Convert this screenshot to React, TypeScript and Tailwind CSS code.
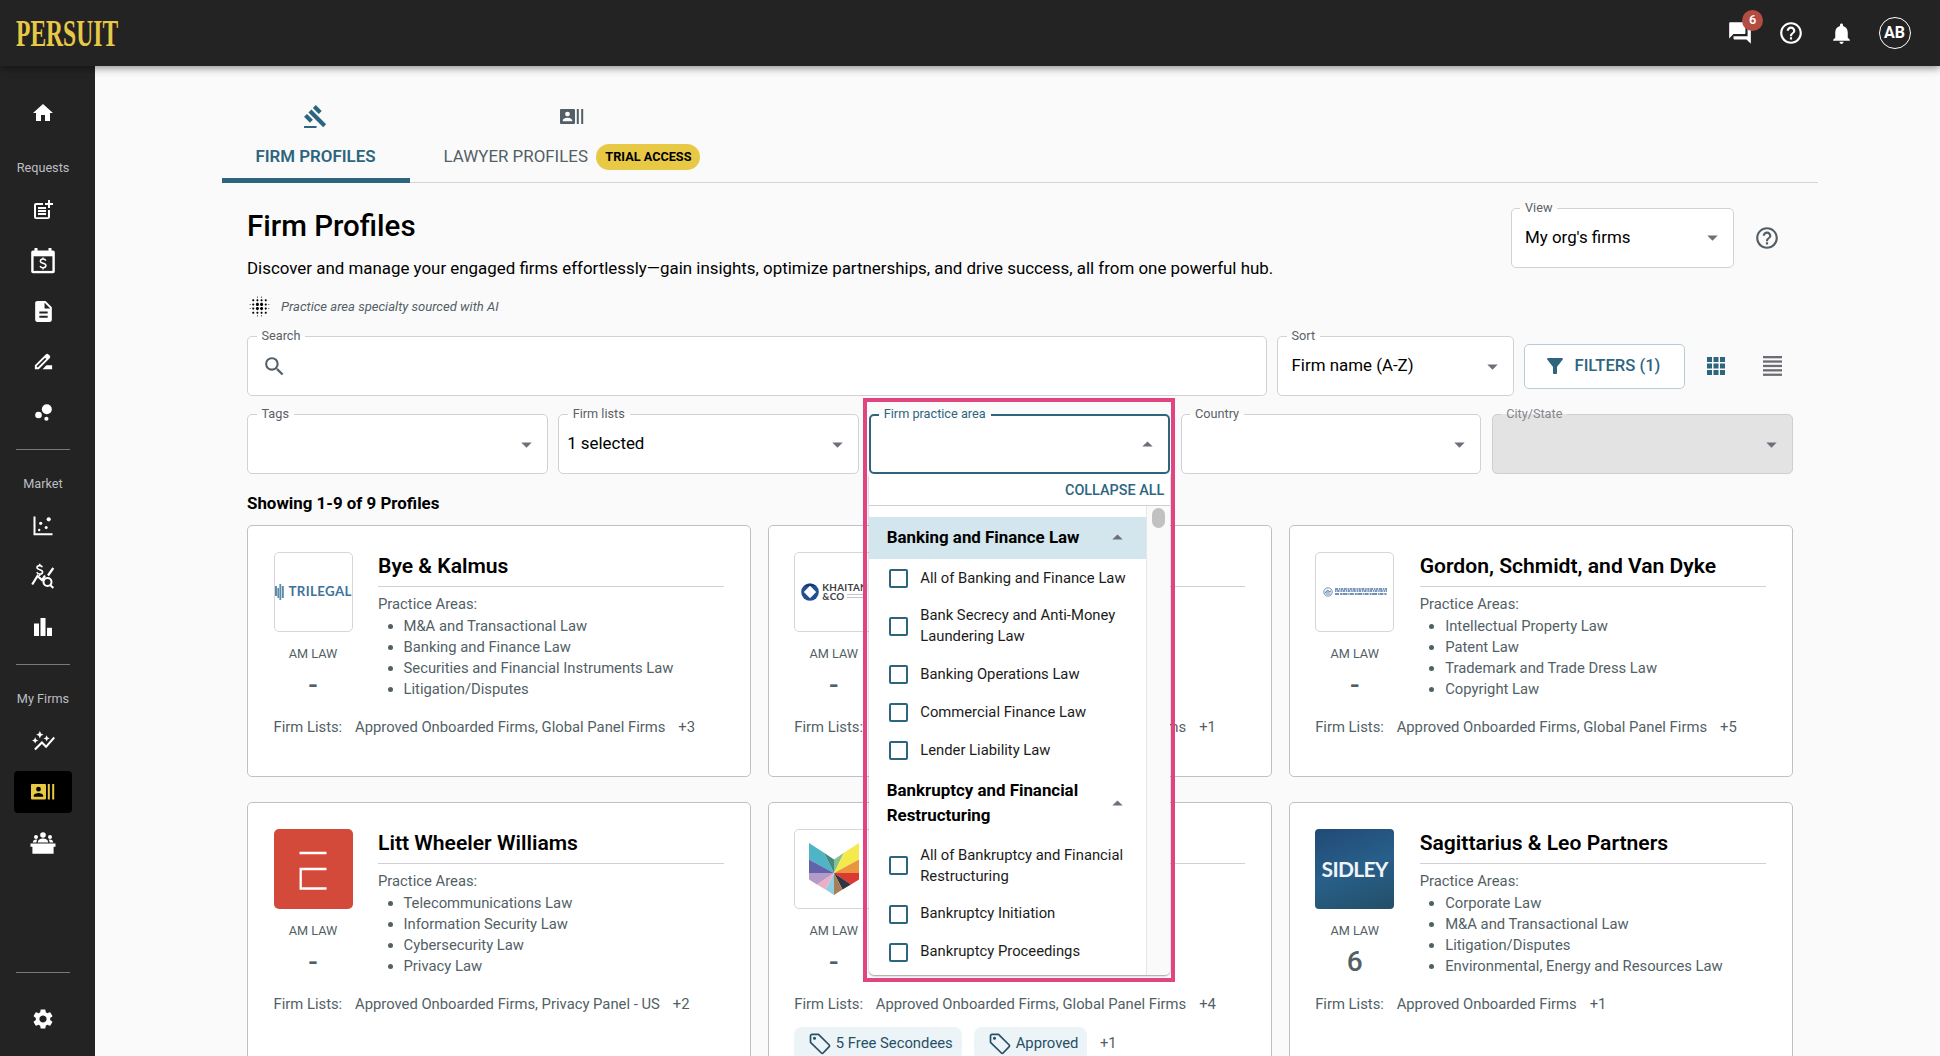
import type { ReactNode } from "react";
import {
  MdArrowDropDown,
  MdArrowDropUp,
  MdAutoGraph,
  MdBlurOn,
  MdBubbleChart,
  MdDescription,
  MdDriveFileRenameOutline,
  MdFilterAlt,
  MdForum,
  MdGavel,
  MdHelpOutline,
  MdHome,
  MdNotifications,
  MdPostAdd,
  MdSearch,
  MdSettings,
} from "react-icons/md";

/* ---------- icons ---------- */

function CalendarMoneyIcon() {
  return (
    <svg width="26" height="28" viewBox="0 0 26 28" fill="none">
      <path d="M4.5 1h3v2.5h11V1h3v2.5H23A1.8 1.8 0 0 1 24.8 5.3V24.500A1.8 1.8 0 0 1 23 26.300H3A1.800 1.800 0 0 1 1.200 24.500V5.300A1.800 1.800 0 0 1 3 3.500h1.500z" fill="#fff" />
      <rect x="3.600" y="9.300" width="18.800" height="14.600" fill="#232323" />
      <path d="M15.800 13.600c-.4-1-1.400-1.500-2.700-1.500-1.500 0-2.700.8-2.700 2.100 0 2.900 5.500 1.300 5.500 4.300 0 1.400-1.300 2.200-2.800 2.200-1.400 0-2.600-.6-3-1.800M13 10.400v1.800M13 20.600v1.800" stroke="#fff" strokeWidth="1.500" />
    </svg>
  );
}

function ScatterIcon() {
  return (
    <svg width="20" height="20" viewBox="0 0 20 20" fill="#fff">
      <path d="M.5.500h2v16.800h17v2H.5z" />
      <circle cx="7.700" cy="7.300" r="1.600" />
      <circle cx="15.700" cy="3.300" r="2.100" />
      <circle cx="13.200" cy="11.400" r="1.500" />
      <circle cx="6.200" cy="14" r="1.200" />
    </svg>
  );
}

function MoneyStatsIcon() {
  return (
    <svg width="24" height="26" viewBox="0 0 24 26" fill="none" stroke="#fff">
      <path d="M1.200 21.500 6.500 13l4.500 4 3-4.500M17 12.500l5.300-7.500" strokeWidth="2.200" />
      <circle cx="16.500" cy="19" r="4" strokeWidth="2" />
      <path d="m19.300 22 3 3" strokeWidth="2" />
      <path d="M11.300 4.200C10.800 3 9.800 2.600 8.700 2.600c-1.500 0-2.700.7-2.700 2 0 2.700 5.600 1.500 5.600 4.300 0 1.400-1.300 2.100-2.800 2.100-1.400 0-2.500-.5-3-1.700M8.700.700v2M8.700 11v2" strokeWidth="1.600" />
    </svg>
  );
}

function BarsIcon() {
  return (
    <svg width="18" height="18" viewBox="0 0 18 18" fill="#fff">
      <rect x="0" y="5.500" width="5" height="12.500" />
      <rect x="6.500" y="0" width="5" height="18" />
      <rect x="13" y="9.800" width="5" height="8.200" />
    </svg>
  );
}

function ContactsIcon({ width, height }: { width: number; height: number }) {
  return (
    <svg width={width} height={height} viewBox="0 0 24 15.500" preserveAspectRatio="none" fill="currentColor">
      <path
        fillRule="evenodd"
        d="M1 0h13a1 1 0 0 1 1 1v13.500a1 1 0 0 1-1 1H1a1 1 0 0 1-1-1V1a1 1 0 0 1 1-1zm6.500 2.800a2.400 2.400 0 1 0 0 4.800 2.400 2.400 0 0 0 0-4.800zM2.800 12.700h9.400v-1c0-1.700-3.100-2.600-4.700-2.600s-4.700.9-4.700 2.600z"
      />
      <rect x="16.800" width="2" height="15.500" />
      <rect x="21.200" width="2" height="15.500" />
    </svg>
  );
}

function PanelIcon() {
  return (
    <svg width="26" height="22" viewBox="0 0 26 22" fill="#fff">
      <circle cx="13" cy="3" r="2.800" />
      <circle cx="6" cy="5" r="2" />
      <circle cx="20" cy="5" r="2" />
      <path d="M7.800 10.500c0-2.600 2.500-4 5.200-4s5.200 1.400 5.200 4zM2.800 10.500c0-1.900 1.500-2.900 3.500-2.900.4 0 .8 0 1 .1-.6.800-.9 1.700-.9 2.800zM23.200 10.500c0-1.900-1.500-2.900-3.500-2.900-.4 0-.8 0-1 .1.600.8.900 1.700.9 2.800z" />
      <path d="M.5 11.500h25v3.200h-1.900v7H2.400v-7H.5z" />
    </svg>
  );
}

function GridIcon() {
  const cells = [0, 6.500, 13];
  return (
    <svg width="18" height="18" viewBox="0 0 18 18" fill="#2d657f">
      {cells.map((y) => cells.map((x) => <rect key={`${x}-${y}`} x={x} y={y} width="5" height="5" />))}
    </svg>
  );
}

function ListIcon() {
  return (
    <svg width="19" height="20" viewBox="0 0 19 20" fill="#6c6c74">
      {[0, 4.400, 8.800, 13.200, 17.600].map((y) => (
        <rect key={y} y={y} width="19" height="2.300" />
      ))}
    </svg>
  );
}

function TagIcon() {
  return (
    <svg width="22" height="22" viewBox="0 0 22 22" fill="none" stroke="#255065" strokeWidth="1.700" strokeLinejoin="round">
      <path d="M1.500 2.800A1.500 1.500 0 0 1 3 1.300h6.500L20.200 12a1.200 1.200 0 0 1 0 1.700l-6.100 6.300a1.200 1.200 0 0 1-1.700 0L1.500 9.300z" />
      <circle cx="5.500" cy="5.200" r=".7" fill="#255065" />
    </svg>
  );
}

/* ---------- firm logos ---------- */

function LogoFrame({ children }: { children: ReactNode }) {
  return (
    <div className="flex h-[80px] w-[79px] items-center justify-center overflow-hidden rounded-[5px] border border-[#d6d6da] bg-white">
      {children}
    </div>
  );
}

function TrilegalLogo() {
  return (
    <LogoFrame>
      <div className="flex w-full items-center gap-[5px]">
        <svg width="9" height="16" viewBox="0 0 9 16" fill="#5f8bab" className="shrink-0">
          <rect x="0" y="2" width="2" height="10" />
          <rect x="2.400" y="4" width="1.600" height="10" />
          <rect x="4.400" y="0" width="1.800" height="16" />
          <rect x="6.800" y="2" width="2" height="12" />
        </svg>
        <span className="font-[Lato] text-[13.300px] leading-none font-bold tracking-[0.350px] text-[#3f7299]">TRILEGAL</span>
      </div>
    </LogoFrame>
  );
}

function KhaitanLogo() {
  return (
    <LogoFrame>
      <div className="flex w-full items-center gap-[3px] pl-[6px]">
        <svg width="18" height="18" viewBox="0 0 18 18" className="shrink-0">
          <circle cx="9" cy="9" r="8.800" fill="#234f92" />
          <path d="M3 3.500A8.800 8.800 0 0 1 15 3L9 3z" fill="#17335f" />
          <path d="m9 2.800 6.200 6.200L9 15.200 2.800 9z" fill="#fff" />
        </svg>
        <div className="w-[50px] shrink-0 font-[Lato] text-[9.800px] leading-[9px] font-bold tracking-[0.300px] text-[#3d3d42]">
          <div>KHAITAN</div>
          <div className="flex items-center gap-[2px]">
            &amp;CO
            <span className="flex w-5 flex-col gap-[1.500px]">
              <span className="h-px bg-[#c4c4c8]" />
              <span className="h-px bg-[#c4c4c8]" />
            </span>
          </div>
        </div>
      </div>
    </LogoFrame>
  );
}

function PatentLogo() {
  return (
    <LogoFrame>
      <div className="flex items-center gap-[2px] text-[#4d76a4]">
        <svg width="10" height="10" viewBox="0 0 10 10" fill="none" stroke="currentColor">
          <circle cx="5" cy="5" r="4.200" strokeWidth=".8" />
          <path d="M2 6.500 4.500 3l2 1.500L8 4M2.500 5h5M3 7h4.500" strokeWidth=".9" />
        </svg>
        <div className="flex w-[52px] flex-col gap-[1px]">
          <svg width="52" height="4" viewBox="0 0 52 4" stroke="currentColor">
            <path d="M0 1h52" strokeWidth="1.300" strokeDasharray="3 .8 1.500 .6 2.200 .7" />
            <path d="M0 3h52" strokeWidth="1.300" strokeDasharray="1.500 .6 2.500 .8" />
          </svg>
          <svg width="52" height="2" viewBox="0 0 52 2" stroke="currentColor">
            <path d="M0 1h52" strokeWidth="1.800" strokeDasharray="4 1 2 .5 5 .8 1 .5" opacity=".8" />
          </svg>
        </div>
      </div>
    </LogoFrame>
  );
}

function RedLogo() {
  return (
    <div className="flex h-[80px] w-[79px] items-center justify-center rounded-[5px] bg-[#d44a3a]">
      <svg width="28" height="40" viewBox="0 0 28 40" fill="none" stroke="#fff" strokeWidth="2.300" className="mt-1">
        <path d="M.5 2h27M27.500 18H1.700v19.500h25.800" />
      </svg>
    </div>
  );
}

function FacetLogo() {
  const facets: [string, string][] = [
    ["0,0 15,9.800 25,30 0,16.500", "#4fb4c6"],
    ["15,9.800 25,16.500 25,30", "#43897f"],
    ["25,16.500 35,9.800 25,30", "#86c08d"],
    ["35,9.800 50,0 50,16.500 25,30", "#f4ea4c"],
    ["50,16.500 50,30 25,30", "#ea953f"],
    ["50,30 50,36.500 42,41.500 25,30", "#da3a32"],
    ["42,41.500 33.500,46.500 25,30", "#32343f"],
    ["33.500,46.500 25,52 25,30", "#a67e58"],
    ["25,52 16.500,46.500 25,30", "#8fcfe2"],
    ["16.500,46.500 8,41.500 25,30", "#edaec5"],
    ["8,41.500 0,36.500 0,30 25,30", "#b39ac8"],
    ["0,30 0,16.500 25,30", "#6263aa"],
  ];
  return (
    <LogoFrame>
      <svg width="50" height="52" viewBox="0 0 50 52">
        {facets.map(([points, fill]) => (
          <polygon key={points} points={points} fill={fill} />
        ))}
      </svg>
    </LogoFrame>
  );
}

function SidleyLogo() {
  return (
    <div className="flex h-[80px] w-[79px] items-center justify-center rounded-[4px] bg-linear-160 from-[#214a76] via-[#285f8a] to-[#234f66]">
      <span className="font-[Lato] text-[21px] leading-none font-bold tracking-[-0.7px] text-[#f1f4f6]">SIDLEY</span>
    </div>
  );
}

/* ---------- chrome ---------- */

function Header() {
  return (
    <header className="relative z-10 flex h-[66px] shrink-0 items-center justify-between bg-[#232323] pr-[29.500px] pl-4 text-white shadow-[0_2px_8px_rgba(0,0,0,0.45)]">
      <div className="w-[102px]">
        <span className="inline-block origin-left scale-x-[0.62] font-['Liberation_Serif'] text-[38px] leading-[60px] font-bold text-[#e7c946]">
          PERSUIT
        </span>
      </div>
      <div className="flex items-center">
        <div className="relative mr-[24.500px]">
          <MdForum size={26} />
          <span className="absolute -top-[10.500px] left-[15px] flex size-[21px] items-center justify-center rounded-full bg-[#b34d42] text-[12.700px] font-semibold">
            6
          </span>
        </div>
        <MdHelpOutline size={26} className="mr-[25px]" />
        <MdNotifications size={25} className="mr-[25px]" />
        <div className="flex size-8 items-center justify-center rounded-full border-[1.500px] border-white text-[16px] font-bold">
          AB
        </div>
      </div>
    </header>
  );
}

function NavItem({ children, active = false }: { children: ReactNode; active?: boolean }) {
  return (
    <div
      className={
        active
          ? "flex h-[42px] w-[58px] items-center justify-center rounded-[4px] bg-black text-[#e7c946]"
          : "flex h-[42px] w-[58px] items-center justify-center"
      }
    >
      {children}
    </div>
  );
}

function Sidebar() {
  return (
    <nav className="flex w-[95px] shrink-0 flex-col bg-[#232323] pt-[26px] text-white">
      <div className="flex w-[86px] grow flex-col items-center pb-[16px]">
        <NavItem><MdHome size={24} /></NavItem>
        <div className="mt-[25px] text-[12.700px] leading-[18px] text-[#bdbdc2]">Requests</div>
        <div className="mt-[12px] flex flex-col gap-[8.600px]">
          <NavItem><MdPostAdd size={24} /></NavItem>
          <NavItem><CalendarMoneyIcon /></NavItem>
          <NavItem><MdDescription size={25} /></NavItem>
          <NavItem><MdDriveFileRenameOutline size={23} /></NavItem>
          <NavItem><MdBubbleChart size={25} /></NavItem>
        </div>
        <div className="mt-[15.400px] h-px w-[54px] bg-[#77777d]" />
        <div className="mt-[25px] text-[12.700px] leading-[18px] text-[#bdbdc2]">Market</div>
        <div className="mt-[12px] flex flex-col gap-[8.600px]">
          <NavItem><ScatterIcon /></NavItem>
          <NavItem><MoneyStatsIcon /></NavItem>
          <NavItem><BarsIcon /></NavItem>
        </div>
        <div className="mt-[16.500px] h-px w-[54px] bg-[#77777d]" />
        <div className="mt-[25px] text-[12.700px] leading-[18px] text-[#bdbdc2]">My Firms</div>
        <div className="mt-[12px] flex flex-col gap-[8.600px]">
          <NavItem><MdAutoGraph size={25} /></NavItem>
          <NavItem active><ContactsIcon width={24} height={15.500} /></NavItem>
          <NavItem><PanelIcon /></NavItem>
        </div>
        <div className="mt-auto mb-[25px] h-px w-[54px] bg-[#77777d]" />
        <NavItem><MdSettings size={24} /></NavItem>
      </div>
    </nav>
  );
}

function Tabs() {
  return (
    <div className="flex h-[116.500px] border-b border-[#d4d4d8]">
      <div className="relative flex w-[188px] flex-col items-center pt-[38px] text-[#2d657f]">
        <MdGavel size={25} />
        <span className="mt-[14px] text-[16.900px] leading-[26px] font-semibold">FIRM PROFILES</span>
        <span className="absolute -bottom-px left-0 h-[4.500px] w-full bg-[#2d657f]" />
      </div>
      <div className="flex w-[325px] flex-col items-center pt-[43px] text-[#535f66]">
        <ContactsIcon width={24} height={15} />
        <div className="mt-[19px] flex items-center gap-[8.500px] text-[16.900px] leading-[26px]">
          LAWYER PROFILES
          <span className="mt-px flex h-[25.500px] w-[104px] items-center justify-center rounded-full bg-[#e7c946] text-[12.700px] font-bold text-black">
            TRIAL ACCESS
          </span>
        </div>
      </div>
    </div>
  );
}

/* ---------- form fields ---------- */

function Field({
  label,
  className,
  value,
  inset = "pl-[13.500px]",
  state = "normal",
  children,
}: {
  label: string;
  className: string;
  value?: string;
  inset?: string;
  state?: "normal" | "open" | "disabled";
  children?: ReactNode;
}) {
  const frame =
    state === "open"
      ? "border-2 border-[#2d657f] bg-white"
      : state === "disabled"
        ? "border border-[#cfcfd2] bg-[#e3e3e3]"
        : "border border-[#d2d2d5] bg-white";
  const labelTone =
    state === "open"
      ? "-top-[11px] left-[7.500px] to-white text-[#2d657f]"
      : state === "disabled"
        ? "-top-[10px] left-[8.500px] to-[#e3e3e3] text-[#86868e]"
        : "-top-[10px] left-[8.500px] to-white text-[#5a6167]";
  return (
    <div className={`relative flex h-[60px] items-center rounded-[5px] pr-[8px] ${frame} ${inset} ${className}`}>
      <span className={`absolute bg-linear-to-b from-[#fafafa] from-50% to-50% px-[5px] text-[12.700px] leading-[18px] whitespace-nowrap ${labelTone}`}>
        {label}
      </span>
      {children ?? (
        <>
          <span className="grow text-[16.900px] text-black">{value}</span>
          {state === "open" ? (
            <MdArrowDropUp size={25} className="text-[#6f6f7a]" />
          ) : (
            <MdArrowDropDown size={25} className="text-[#6f6f7a]" />
          )}
        </>
      )}
    </div>
  );
}

/* ---------- practice area menu ---------- */

function GroupHeading({ label, active = false }: { label: string; active?: boolean }) {
  return (
    <div
      className={
        active
          ? "flex h-[42.500px] items-center justify-between bg-[#d3e6ed] pr-[16.500px] pl-[17.500px]"
          : "flex h-[67.500px] items-center justify-between pr-[16.500px] pl-[17.500px]"
      }
    >
      <span className="w-[210px] text-[16.900px] leading-[25.300px] font-bold text-black">{label}</span>
      <MdArrowDropUp size={25} className="shrink-0 text-[#6f6f7a]" />
    </div>
  );
}

function Option({ label, tall = false }: { label: string; tall?: boolean }) {
  return (
    <div className={tall ? "flex h-[58.200px] items-center gap-[12px] pl-[20px]" : "flex h-[38px] items-center gap-[12px] pl-[20px]"}>
      <span className="size-[19px] shrink-0 rounded-[2px] border-2 border-[#2d657f] bg-white" />
      <span className="w-[212px] text-[14.800px] leading-[21.300px] text-[#1b1b1b]">{label}</span>
    </div>
  );
}

function PracticeMenu() {
  return (
    <div className="absolute top-full -left-[2px] z-20 flex h-[501px] w-[301px] flex-col rounded-b-[5px] bg-white shadow-[0_1px_2px_rgba(0,0,0,0.4)]">
      <div className="flex h-[32px] items-center justify-end border-b border-[#cfcfd3] pt-[2px] pr-[6px] text-[14.400px] font-medium text-[#2d657f]">
        COLLAPSE ALL
      </div>
      <div className="flex min-h-0 grow">
        <div className="w-[277px] pt-[10.700px]">
          <GroupHeading label="Banking and Finance Law" active />
          <Option label="All of Banking and Finance Law" />
          <Option label="Bank Secrecy and Anti-Money Laundering Law" tall />
          <Option label="Banking Operations Law" />
          <Option label="Commercial Finance Law" />
          <Option label="Lender Liability Law" />
          <GroupHeading label="Bankruptcy and Financial Restructuring" />
          <Option label="All of Bankruptcy and Financial Restructuring" tall />
          <Option label="Bankruptcy Initiation" />
          <Option label="Bankruptcy Proceedings" />
        </div>
        <div className="flex grow justify-center rounded-br-[5px] border-l border-[#e6e6e6] bg-[#fafafa] pt-[2px]">
          <span className="h-[20px] w-[13px] rounded-full bg-[#c1c1c1]" />
        </div>
      </div>
    </div>
  );
}

/* ---------- firm cards ---------- */

type Firm = {
  id: string;
  name: string;
  logo: ReactNode;
  rank: string;
  areas: string[];
  lists: string;
  more: string;
  tags?: string[];
  moreTags?: string;
};

const firms: Firm[] = [
  {
    id: "bye",
    name: "Bye & Kalmus",
    logo: <TrilegalLogo />,
    rank: "-",
    areas: ["M&A and Transactional Law", "Banking and Finance Law", "Securities and Financial Instruments Law", "Litigation/Disputes"],
    lists: "Approved Onboarded Firms, Global Panel Firms",
    more: "+3",
  },
  {
    id: "khaitan",
    name: "",
    logo: <KhaitanLogo />,
    rank: "-",
    areas: [],
    lists: "Approved Onboarded Firms, Global Panel Firms",
    more: "+1",
  },
  {
    id: "gordon",
    name: "Gordon, Schmidt, and Van Dyke",
    logo: <PatentLogo />,
    rank: "-",
    areas: ["Intellectual Property Law", "Patent Law", "Trademark and Trade Dress Law", "Copyright Law"],
    lists: "Approved Onboarded Firms, Global Panel Firms",
    more: "+5",
  },
  {
    id: "litt",
    name: "Litt Wheeler Williams",
    logo: <RedLogo />,
    rank: "-",
    areas: ["Telecommunications Law", "Information Security Law", "Cybersecurity Law", "Privacy Law"],
    lists: "Approved Onboarded Firms, Privacy Panel - US",
    more: "+2",
  },
  {
    id: "facet",
    name: "",
    logo: <FacetLogo />,
    rank: "-",
    areas: [],
    lists: "Approved Onboarded Firms, Global Panel Firms",
    more: "+4",
    tags: ["5 Free Secondees", "Approved"],
    moreTags: "+1",
  },
  {
    id: "sagittarius",
    name: "Sagittarius & Leo Partners",
    logo: <SidleyLogo />,
    rank: "6",
    areas: ["Corporate Law", "M&A and Transactional Law", "Litigation/Disputes", "Environmental, Energy and Resources Law"],
    lists: "Approved Onboarded Firms",
    more: "+1",
  },
];

function FirmCard({ firm }: { firm: Firm }) {
  return (
    <article className="flex flex-col rounded-[5px] border-[1.500px] border-[#c0bfc8] bg-white px-[25.500px] pt-[25.500px] text-[14.800px] text-[#535f66]">
      <div className="flex h-[161px] shrink-0 gap-[25.500px]">
        <div className="flex w-[79px] shrink-0 flex-col items-center">
          {firm.logo}
          <span className="mt-[12px] text-[12.700px] leading-[20px]">AM LAW</span>
          <span className="mt-[4px] text-[28px] leading-[34px] font-medium">{firm.rank}</span>
        </div>
        <div className="grow">
          <h2 className="h-[35px] border-b border-[#d0d0d6] text-[21.100px] leading-[28px] font-semibold text-black">{firm.name}</h2>
          {firm.areas.length > 0 && (
            <>
              <p className="mt-[7px] leading-[21px]">Practice Areas:</p>
              <ul className="mt-[1.500px] list-disc pl-[25.500px] leading-[21.100px]">
                {firm.areas.map((area) => (
                  <li key={area}>{area}</li>
                ))}
              </ul>
            </>
          )}
        </div>
      </div>
      <div className="mt-[3px] flex leading-[22px]">
        <span className="w-[81.500px]">Firm Lists:</span>
        <span>{firm.lists}</span>
        <span className="ml-[13px]">{firm.more}</span>
      </div>
      {firm.tags && (
        <div className="mt-[12px] flex items-center">
          {firm.tags.map((tag) => (
            <span key={tag} className="mr-[12.500px] flex h-[34px] items-center gap-[5px] rounded-[8px] bg-[#ecf4f8] pr-[9px] pl-[14.500px] text-[#255065]">
              <TagIcon />
              {tag}
            </span>
          ))}
          <span>{firm.moreTags}</span>
        </div>
      )}
    </article>
  );
}

/* ---------- page ---------- */

export default function App() {
  return (
    <div className="flex h-[1056px] w-[1940px] flex-col overflow-hidden bg-[#fafafa] font-[Roboto,sans-serif]">
      <Header />
      <div className="flex min-h-0 grow">
        <Sidebar />
        <main className="ml-[126.500px] w-[1596.500px]">
          <Tabs />
          <div className="px-[25.500px]">
            <div className="flex h-[142px] items-start justify-between">
              <div>
                <h1 className="mt-[25px] text-[29.500px] leading-[36px] font-medium text-black">Firm Profiles</h1>
                <p className="mt-[12.500px] text-[16.900px] leading-[25px] text-black">
                  Discover and manage your engaged firms effortlessly—gain insights, optimize partnerships, and drive success, all
                  from one powerful hub.
                </p>
                <p className="mt-[13px] flex items-center gap-[9px] text-[13.050px] leading-[25px] text-[#535f66] italic">
                  <MdBlurOn size={25} className="text-black" />
                  Practice area specialty sourced with AI
                </p>
              </div>
              <div className="mt-[25px] mr-[13px] flex items-center gap-[20px]">
                <Field label="View" className="w-[223px]" value="My org's firms" />
                <MdHelpOutline size={26} className="text-[#535f66]" />
              </div>
            </div>

            <div className="mt-[11.500px] flex items-center gap-[10px]">
              <Field label="Search" className="w-[1020px]">
                <MdSearch size={25} className="text-[#535f66]" />
              </Field>
              <Field label="Sort" className="w-[237px]" value="Firm name (A-Z)" />
              <button className="flex h-[45px] w-[161px] items-center rounded-[5px] border-[1.500px] border-[#b6cdd8] bg-white pl-[17.500px] text-[16.600px] font-medium text-[#2d657f]">
                <MdFilterAlt size={24} className="mr-[8px]" />
                <span className="pt-px">FILTERS (1)</span>
              </button>
              <div className="ml-[11.500px] flex items-center gap-[38px]">
                <GridIcon />
                <ListIcon />
              </div>
            </div>

            <div className="mt-[18px] flex gap-[10.300px]">
              <Field label="Tags" className="w-[301px]" />
              <Field label="Firm lists" className="w-[301px]" inset="pl-[8px]" value="1 selected" />
              <div className="relative">
                <span className="absolute -top-[16.500px] -left-[6.500px] z-30 h-[584.500px] w-[312px] border-4 border-[#e0457f]" />
                <Field label="Firm practice area" className="w-[301px]" state="open" />
                <div className="absolute top-full left-[2px] h-0 w-[301px]">
                  <PracticeMenu />
                </div>
              </div>
              <Field label="Country" className="w-[301px]" />
              <Field label="City/State" className="w-[301px]" state="disabled" />
            </div>

            <p className="mt-[17px] text-[16.900px] leading-[25px] font-bold text-black">Showing 1-9 of 9 Profiles</p>

            <div className="mt-[9px] grid grid-cols-3 grid-rows-[251.500px_300px] gap-x-[17px] gap-y-[25.500px]">
              {firms.map((firm) => (
                <FirmCard key={firm.id} firm={firm} />
              ))}
            </div>
          </div>
        </main>
      </div>
    </div>
  );
}
